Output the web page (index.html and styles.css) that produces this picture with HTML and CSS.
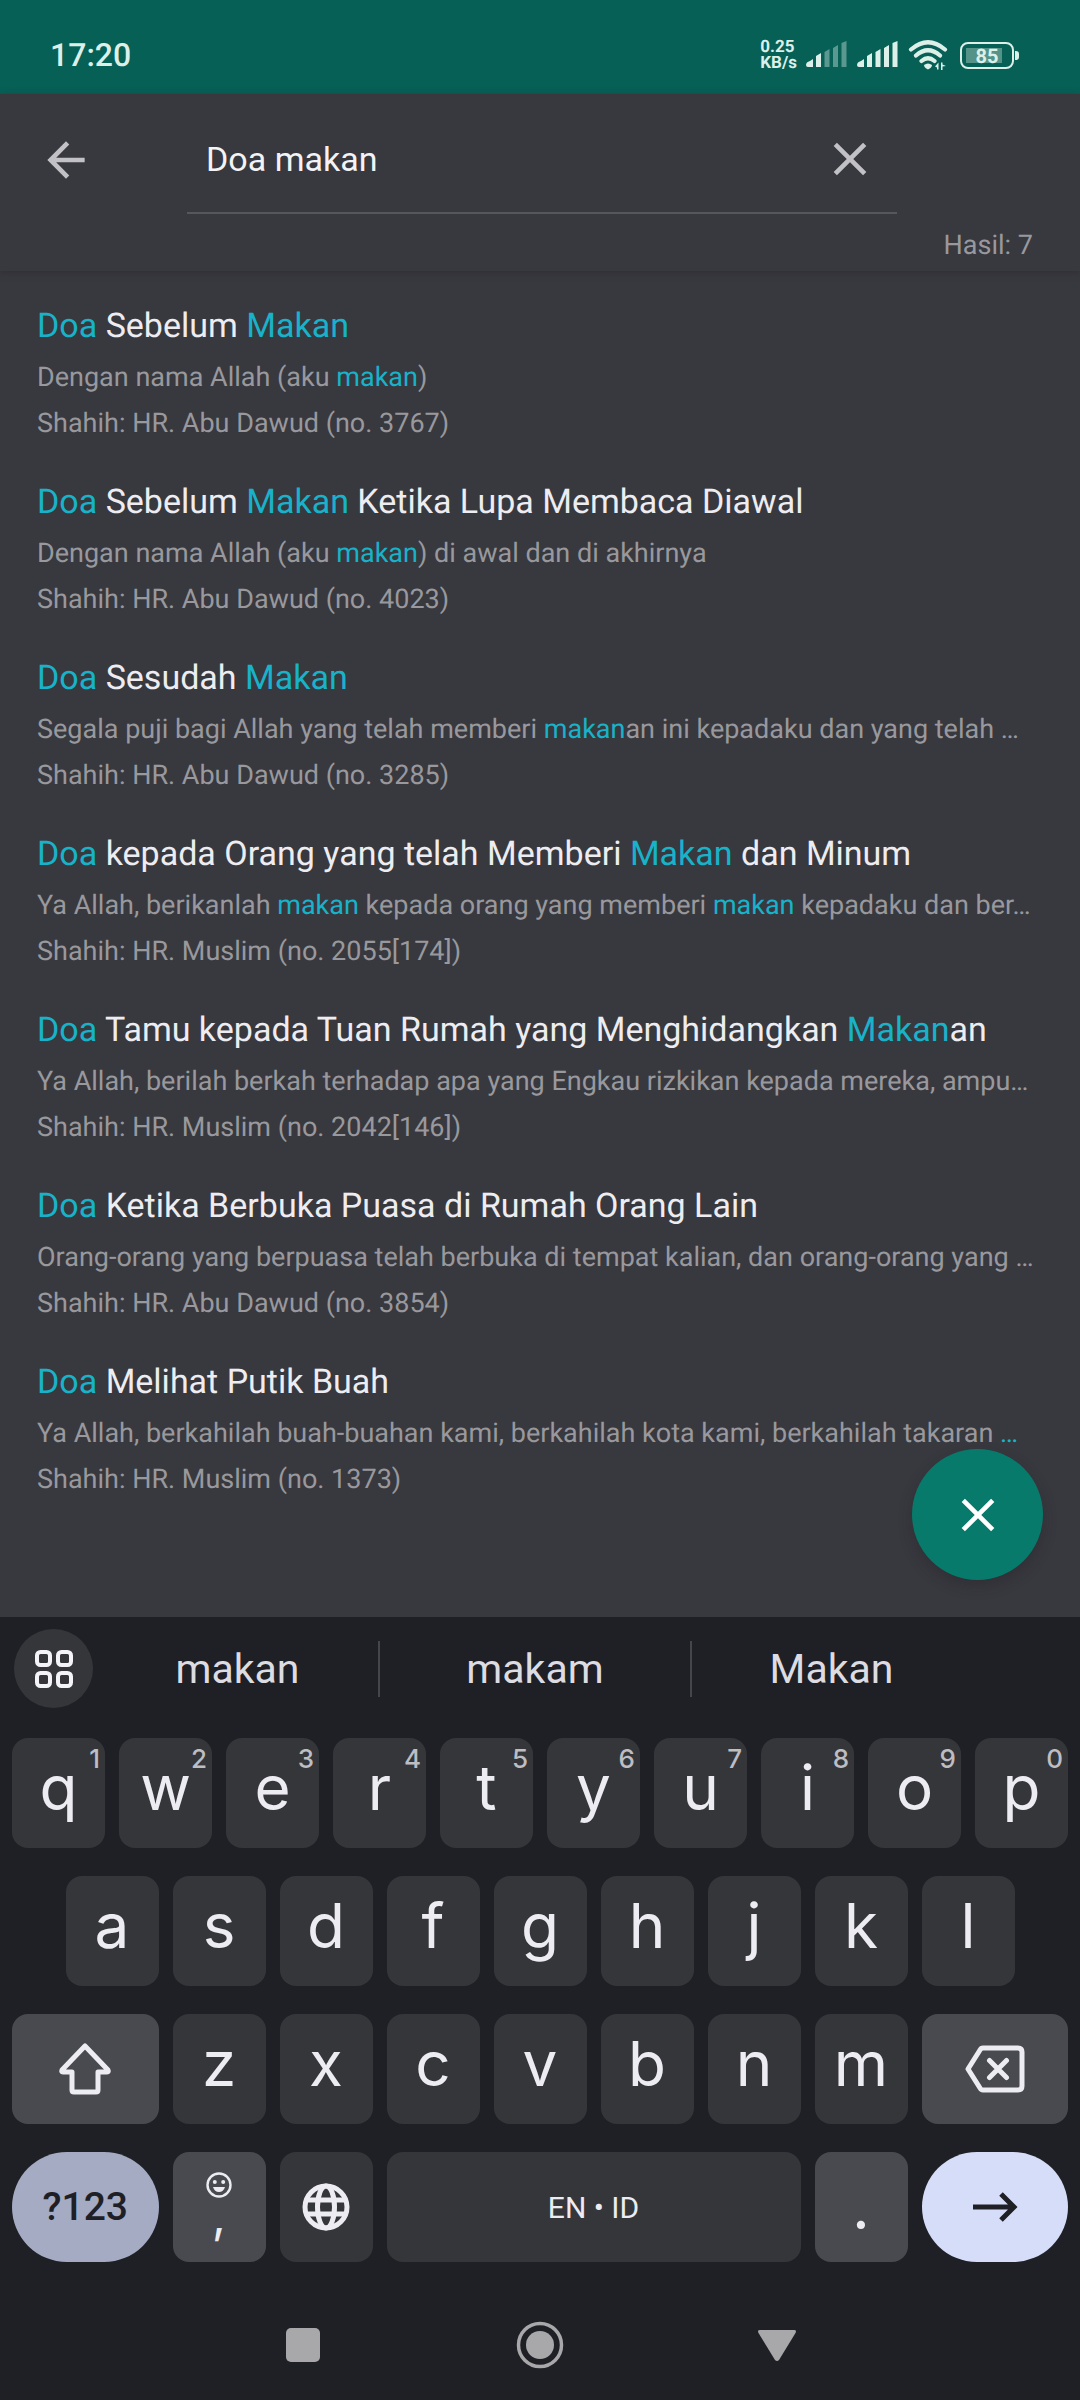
FILE: index.html
```html
<!DOCTYPE html>
<html lang="id">
<head>
<meta charset="utf-8">
<meta name="viewport" content="width=device-width, initial-scale=1">
<title>Doa makan</title>
<link rel="stylesheet" href="styles.css">
</head>
<body>
<div class="status">
  <span class="clock">17:20</span>
  <div class="status-icons">
    <span class="speed">0.25<br>KB/s</span>
    <svg class="signal" viewBox="0 0 42 28" aria-hidden="true">
      <path d="M0 24q0-3 4-4l3-2v8H2q-2 0-2-2zM10 15l5-3v14h-5z"/>
      <path opacity=".4" d="M18.500 11l5-3v18h-5zM27 7l5-3v22h-5zM35.500 2l5-2v26h-5z"/>
    </svg>
    <svg class="signal" viewBox="0 0 42 28" aria-hidden="true">
      <path d="M0 24q0-3 4-4l3-2v8H2q-2 0-2-2zM10 15l5-3v14h-5zM18.500 11l5-3v18h-5zM27 7l5-3v22h-5zM35.500 2l5-2v26h-5z"/>
    </svg>
    <svg class="wifi" viewBox="0 0 42 30" aria-hidden="true">
      <g fill="none" stroke="#dcefe9" stroke-width="4.200" stroke-linecap="round">
        <path d="M3 9.500Q20 -5 37 9.500M8 15.500Q20 5 32 15.500M13.500 21Q20 15.500 26.500 21"/>
      </g>
      <path d="M16 25q4-3 8 0q0 2.500-4 4.500Q16 27.500 16 25zM30.500 22.500v7h-1.500v-2l-2-1zM33 22.500h1.500v2l3.500 1.500-3.500.500v3.500H33z"/>
    </svg>
    <span class="battery"><span class="battery-level">85</span></span>
  </div>
</div>

<header class="header">
  <div class="search-row">
    <button class="icon-btn back" aria-label="Kembali">
      <svg class="icon" viewBox="0 0 24 24"><path d="M20 11H7.800l5.600-5.600L12 4l-8 8 8 8 1.400-1.400L7.800 13H20z"/></svg>
    </button>
    <div class="field">
      <input class="query" type="text" value="Doa makan" aria-label="Cari doa">
      <button class="icon-btn clear" aria-label="Hapus">
        <svg class="icon" viewBox="0 0 24 24"><path d="M19 6.400 17.600 5 12 10.600 6.400 5 5 6.400l5.600 5.600L5 17.600 6.400 19l5.600-5.600 5.600 5.600 1.400-1.400-5.600-5.600z"/></svg>
      </button>
    </div>
  </div>
  <p class="count">Hasil: 7</p>
</header>

<main class="results">
  <ul class="list">
    <li class="item">
      <h2 class="title"><mark>Doa</mark> Sebelum <mark>Makan</mark></h2>
      <p class="line">Dengan nama Allah (aku <mark>makan</mark>)</p>
      <p class="line">Shahih: HR. Abu Dawud (no. 3767)</p>
    </li>
    <li class="item">
      <h2 class="title"><mark>Doa</mark> Sebelum <mark>Makan</mark> Ketika Lupa Membaca Diawal</h2>
      <p class="line">Dengan nama Allah (aku <mark>makan</mark>) di awal dan di akhirnya</p>
      <p class="line">Shahih: HR. Abu Dawud (no. 4023)</p>
    </li>
    <li class="item">
      <h2 class="title"><mark>Doa</mark> Sesudah <mark>Makan</mark></h2>
      <p class="line">Segala puji bagi Allah yang telah memberi <mark>makan</mark>an ini kepadaku dan yang telah …</p>
      <p class="line">Shahih: HR. Abu Dawud (no. 3285)</p>
    </li>
    <li class="item">
      <h2 class="title"><mark>Doa</mark> kepada Orang yang telah Memberi <mark>Makan</mark> dan Minum</h2>
      <p class="line">Ya Allah, berikanlah <mark>makan</mark> kepada orang yang memberi <mark>makan</mark> kepadaku dan ber…</p>
      <p class="line">Shahih: HR. Muslim (no. 2055[174])</p>
    </li>
    <li class="item">
      <h2 class="title"><mark>Doa</mark> Tamu kepada Tuan Rumah yang Menghidangkan <mark>Makan</mark>an</h2>
      <p class="line">Ya Allah, berilah berkah terhadap apa yang Engkau rizkikan kepada mereka, ampu…</p>
      <p class="line">Shahih: HR. Muslim (no. 2042[146])</p>
    </li>
    <li class="item">
      <h2 class="title"><mark>Doa</mark> Ketika Berbuka Puasa di Rumah Orang Lain</h2>
      <p class="line">Orang-orang yang berpuasa telah berbuka di tempat kalian, dan orang-orang yang …</p>
      <p class="line">Shahih: HR. Abu Dawud (no. 3854)</p>
    </li>
    <li class="item">
      <h2 class="title"><mark>Doa</mark> Melihat Putik Buah</h2>
      <p class="line">Ya Allah, berkahilah buah-buahan kami, berkahilah kota kami, berkahilah takaran <mark>…</mark></p>
      <p class="line">Shahih: HR. Muslim (no. 1373)</p>
    </li>
  </ul>
  <button class="fab" aria-label="Tutup">
    <svg class="icon" viewBox="0 0 24 24"><path d="M19 6.400 17.600 5 12 10.600 6.400 5 5 6.400l5.600 5.600L5 17.600 6.400 19l5.600-5.600 5.600 5.600 1.400-1.400-5.600-5.600z"/></svg>
  </button>
</main>

<section class="keyboard" aria-label="Papan ketik">
  <div class="suggestions">
    <button class="tools" aria-label="Menu">
      <svg class="tools-icon" viewBox="0 0 40 40" fill="none" stroke="#f4f4f8" stroke-width="4">
        <rect x="3" y="3" width="13" height="13" rx="3.500"/><rect x="24" y="3" width="13" height="13" rx="3.500"/>
        <rect x="3" y="24" width="13" height="13" rx="3.500"/><rect x="24" y="24" width="13" height="13" rx="3.500"/>
      </svg>
    </button>
    <div class="words">
      <button class="word">makan</button>
      <button class="word">makam</button>
      <button class="word">Makan</button>
    </div>
  </div>
  <div class="keys">
    <button class="key">q<span class="hint">1</span></button>
    <button class="key">w<span class="hint">2</span></button>
    <button class="key">e<span class="hint">3</span></button>
    <button class="key">r<span class="hint">4</span></button>
    <button class="key">t<span class="hint">5</span></button>
    <button class="key">y<span class="hint">6</span></button>
    <button class="key">u<span class="hint">7</span></button>
    <button class="key">i<span class="hint">8</span></button>
    <button class="key">o<span class="hint">9</span></button>
    <button class="key">p<span class="hint">0</span></button>

    <button class="key indent">a</button>
    <button class="key">s</button>
    <button class="key">d</button>
    <button class="key">f</button>
    <button class="key">g</button>
    <button class="key">h</button>
    <button class="key">j</button>
    <button class="key">k</button>
    <button class="key">l</button>

    <button class="key wide alt glyph" aria-label="Shift">
      <svg class="shift" viewBox="0 0 54 54"><path d="M27 4 4 28q-1 2 1 2h9v18q0 2 2 2h22q2 0 2-2V30h9q2 0 1-2z"/></svg>
    </button>
    <button class="key">z</button>
    <button class="key">x</button>
    <button class="key">c</button>
    <button class="key">v</button>
    <button class="key">b</button>
    <button class="key">n</button>
    <button class="key">m</button>
    <button class="key wide alt glyph" aria-label="Hapus huruf">
      <svg class="erase" viewBox="0 0 60 48"><path d="M18 3h35q4 0 4 4v34q0 4-4 4H18q-2 0-3-2L3 24 15 5q1-2 3-2zM24.500 15.500l17 17M41.500 15.500l-17 17"/></svg>
    </button>

    <button class="key wide symbols">?123</button>
    <button class="key alt comma">
      <svg class="smile" viewBox="0 0 26 26" aria-hidden="true"><circle cx="13" cy="13" r="11.500" fill="none" stroke="#ececf2" stroke-width="2.400"/><circle cx="8.800" cy="10" r="2"/><circle cx="17.200" cy="10" r="2"/><path d="M7 15h12q-1.500 5-6 5t-6-5z"/></svg>
      <span>,</span>
    </button>
    <button class="key glyph" aria-label="Bahasa">
      <svg class="globe" viewBox="0 0 48 48"><circle cx="24" cy="24" r="21"/><ellipse cx="24" cy="24" rx="8.500" ry="21"/><path d="M4 17h40M4 31h40"/></svg>
    </button>
    <button class="key space">EN • ID</button>
    <button class="key alt period">.</button>
    <button class="key wide enter glyph" aria-label="Berikutnya">
      <svg class="go" viewBox="0 0 46 30"><path d="M1 15h41M29 2l13 13-13 13"/></svg>
    </button>
  </div>
</section>

<nav class="navbar" aria-label="Navigasi sistem">
  <button class="nav-btn" aria-label="Aplikasi terkini"><svg class="nav-icon" viewBox="0 0 48 48"><rect x="7" y="7" width="34" height="34" rx="5"/></svg></button>
  <button class="nav-btn" aria-label="Beranda"><svg class="nav-icon" viewBox="0 0 48 48"><circle cx="24" cy="24" r="21.500" fill="none" stroke="#a8a8aa" stroke-width="3.500"/><circle cx="24" cy="24" r="14"/></svg></button>
  <button class="nav-btn" aria-label="Kembali"><svg class="nav-icon" viewBox="0 0 48 48"><path d="M7 9h34q3 0 1.500 3L26 39q-2 2-4 0L5.500 12Q4 9 7 9z"/></svg></button>
</nav>
</body>
</html>
```
FILE: styles.css
```css
* {
  box-sizing: border-box;
}

body {
  margin: 0;
  min-height: 100vh;
  display: flex;
  flex-direction: column;
  background: #1f2025;
  color: #ededf1;
  font-family: Roboto, "Liberation Sans", sans-serif;
  text-rendering: geometricPrecision;
}

button {
  border: 0;
  padding: 0;
  background: none;
  color: inherit;
  font: inherit;
}

h2, p, ul {
  margin: 0;
  padding: 0;
}

/* Status bar */
.status {
  display: flex;
  justify-content: space-between;
  align-items: center;
  height: 94px;
  padding: 16px 66px 0 50px;
  background: #066056;
  color: #dcefe9;
}

.clock {
  font-size: 32px;
  font-weight: 500;
}

.status-icons {
  display: flex;
  align-items: center;
  gap: 9px;
}

.speed {
  font-size: 17px;
  line-height: 16px;
  font-weight: 700;
}

.signal {
  width: 42px;
  height: 28px;
  fill: #dcefe9;
}

.wifi {
  width: 42px;
  height: 30px;
  fill: #dcefe9;
}

.battery {
  position: relative;
  width: 54px;
  height: 27px;
  margin-left: 1px;
  padding: 4px;
  border: 2px solid #dcefe9;
  border-radius: 8px;
}

.battery::after {
  content: "";
  position: absolute;
  left: 53px;
  top: 7px;
  width: 4px;
  height: 9px;
  border-radius: 0 3px 3px 0;
  background: #dcefe9;
}

.battery-level {
  display: block;
  height: 15px;
  background: linear-gradient(90deg, #559287 85%, transparent 85%);
  font-size: 20px;
  line-height: 17px;
  font-weight: 700;
  text-align: center;
}

/* Search header */
.header {
  position: relative;
  z-index: 1;
  background: #38383f;
  box-shadow: 0 2px 6px #303036;
}

.search-row {
  display: flex;
  height: 120px;
  padding-right: 183px;
}

.icon-btn {
  display: flex;
  align-items: center;
  justify-content: center;
  padding-top: 12px;
}

.icon {
  width: 56px;
  height: 56px;
  fill: #c1c1c6;
}

.back {
  width: 132px;
}

.field {
  flex: 1;
  display: flex;
  margin-left: 55px;
  border-bottom: 2px solid #56565c;
}

.query {
  flex: 1;
  min-width: 0;
  padding: 12px 0 0 19px;
  border: 0;
  outline: 0;
  background: none;
  color: #f3f3f6;
  font: 34px Roboto, "Liberation Sans", sans-serif;
}

.clear {
  width: 94px;
}

.count {
  padding: 8px 47px 3px;
  color: #98989d;
  font-size: 27px;
  line-height: 46px;
  text-align: right;
}

/* Results */
.results {
  position: relative;
  flex: 1;
  padding: 27px 37px;
  background: #38383f;
}

.list {
  display: grid;
  gap: 28px;
  list-style: none;
}

.item {
  min-width: 0;
}

.title {
  font-size: 34px;
  font-weight: 400;
  line-height: 56px;
  white-space: nowrap;
}

.line {
  color: #98989d;
  font-size: 27px;
  line-height: 46px;
  white-space: nowrap;
}

mark {
  background: none;
  color: #18b2c9;
}

.fab {
  position: absolute;
  right: 37px;
  bottom: 37px;
  display: flex;
  align-items: center;
  justify-content: center;
  width: 131px;
  height: 131px;
  border-radius: 50%;
  background: #087a6b;
  box-shadow: 0 6px 14px rgba(30, 30, 32, .3);
}

.fab .icon {
  fill: #fff;
}

/* Keyboard */
.keyboard {
  background: #1f2025;
}

.suggestions {
  display: flex;
  align-items: center;
  height: 121px;
  padding: 0 109px 18px 14px;
}

.tools {
  display: flex;
  align-items: center;
  justify-content: center;
  width: 79px;
  height: 79px;
  border-radius: 50%;
  background: #35363a;
}

.tools-icon {
  width: 40px;
  height: 40px;
}

.words {
  flex: 1;
  display: grid;
  grid-template-columns: 9fr 10fr 9fr;
  margin-left: 4px;
}

.word {
  height: 56px;
  color: #dcdce2;
  font-size: 41px;
}

.word + .word {
  border-left: 2px solid #45464a;
}

.keys {
  display: grid;
  grid-template-columns: repeat(20, 1fr);
  grid-auto-rows: 110px;
  gap: 28px 14px;
  padding: 0 12px;
}

.key {
  position: relative;
  grid-column: span 2;
  padding-bottom: 10px;
  border-radius: 16px;
  background: #35363a;
  color: #ececf2;
  font: 62px/72px Inter, Roboto, sans-serif;
}

.hint {
  position: absolute;
  top: 6px;
  right: 5px;
  color: #bdbdc2;
  font-size: 26px;
  line-height: 30px;
  font-weight: 500;
}

.indent {
  grid-column: 2 / span 2;
}

.wide {
  grid-column: span 3;
}

.alt {
  background: #494a50;
}

.glyph {
  display: flex;
  align-items: center;
  justify-content: center;
  padding: 0;
}

.shift, .erase, .globe, .go {
  fill: none;
  stroke: #ececf2;
  stroke-width: 5;
  stroke-linejoin: round;
}

.shift {
  width: 54px;
  height: 54px;
}

.erase {
  width: 60px;
  height: 48px;
  stroke-linecap: round;
}

.globe {
  width: 48px;
  height: 48px;
}

.go {
  width: 46px;
  height: 30px;
  stroke: #1f2025;
  stroke-linejoin: miter;
}

.symbols {
  padding: 0;
  border-radius: 55px;
  background: #a4abc3;
  color: #1f2025;
  font: 500 39px Roboto, sans-serif;
}

.comma {
  display: flex;
  flex-direction: column;
  align-items: center;
  padding: 20px 0 0;
  font-size: 48px;
  line-height: 36px;
}

.smile {
  width: 26px;
  height: 26px;
  fill: #ececf2;
}

.space {
  grid-column: span 8;
  padding: 0;
  font: 30px Roboto, sans-serif;
}

.period {
  padding: 0;
}

.enter {
  border-radius: 55px;
  background: #d6ddf8;
}

/* System navigation */
.navbar {
  display: flex;
  justify-content: center;
  gap: 189px;
  padding: 59px 0 31px;
}

.nav-btn {
  display: flex;
}

.nav-icon {
  width: 48px;
  height: 48px;
  fill: #a8a8aa;
}
```
